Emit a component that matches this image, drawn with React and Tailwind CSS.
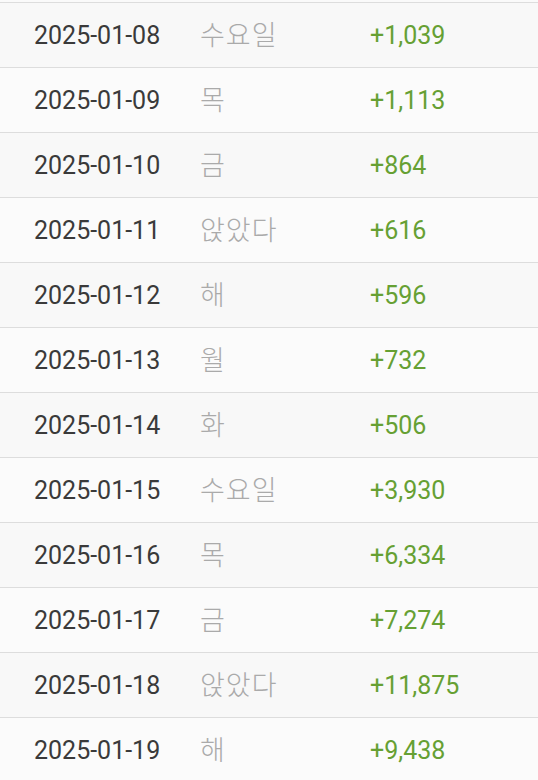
import React from 'react';

const rows = [
  ['2025-01-08', '수요일', '+1,039'],
  ['2025-01-09', '목', '+1,113'],
  ['2025-01-10', '금', '+864'],
  ['2025-01-11', '앉았다', '+616'],
  ['2025-01-12', '해', '+596'],
  ['2025-01-13', '월', '+732'],
  ['2025-01-14', '화', '+506'],
  ['2025-01-15', '수요일', '+3,930'],
  ['2025-01-16', '목', '+6,334'],
  ['2025-01-17', '금', '+7,274'],
  ['2025-01-18', '앉았다', '+11,875'],
  ['2025-01-19', '해', '+9,438'],
];

export default function App() {
  return (
    <div className="h-[780px] overflow-hidden bg-[#fafafa] pt-[2px] font-['Roboto','Noto_Sans_CJK_KR',sans-serif]">
      {rows.map(([date, day, delta], i) => (
        <div
          key={date}
          className={`flex h-[65px] items-center border-t border-[#dddddd] pl-[34px] pt-[2px] text-[25px] ${
            i % 2 === 0 ? 'bg-[#f8f8f8]' : 'bg-[#fbfbfb]'
          }`}
        >
          <span className="w-[166px] text-[#3a3a3a]">{date}</span>
          <span className="mb-[6px] w-[170px] font-light tracking-[1px] text-[27px] leading-none text-[#aaaaaa] font-['Noto_Sans_CJK_KR',sans-serif]">{day}</span>
          <span className="text-[#66a033]">{delta}</span>
        </div>
      ))}
    </div>
  );
}
